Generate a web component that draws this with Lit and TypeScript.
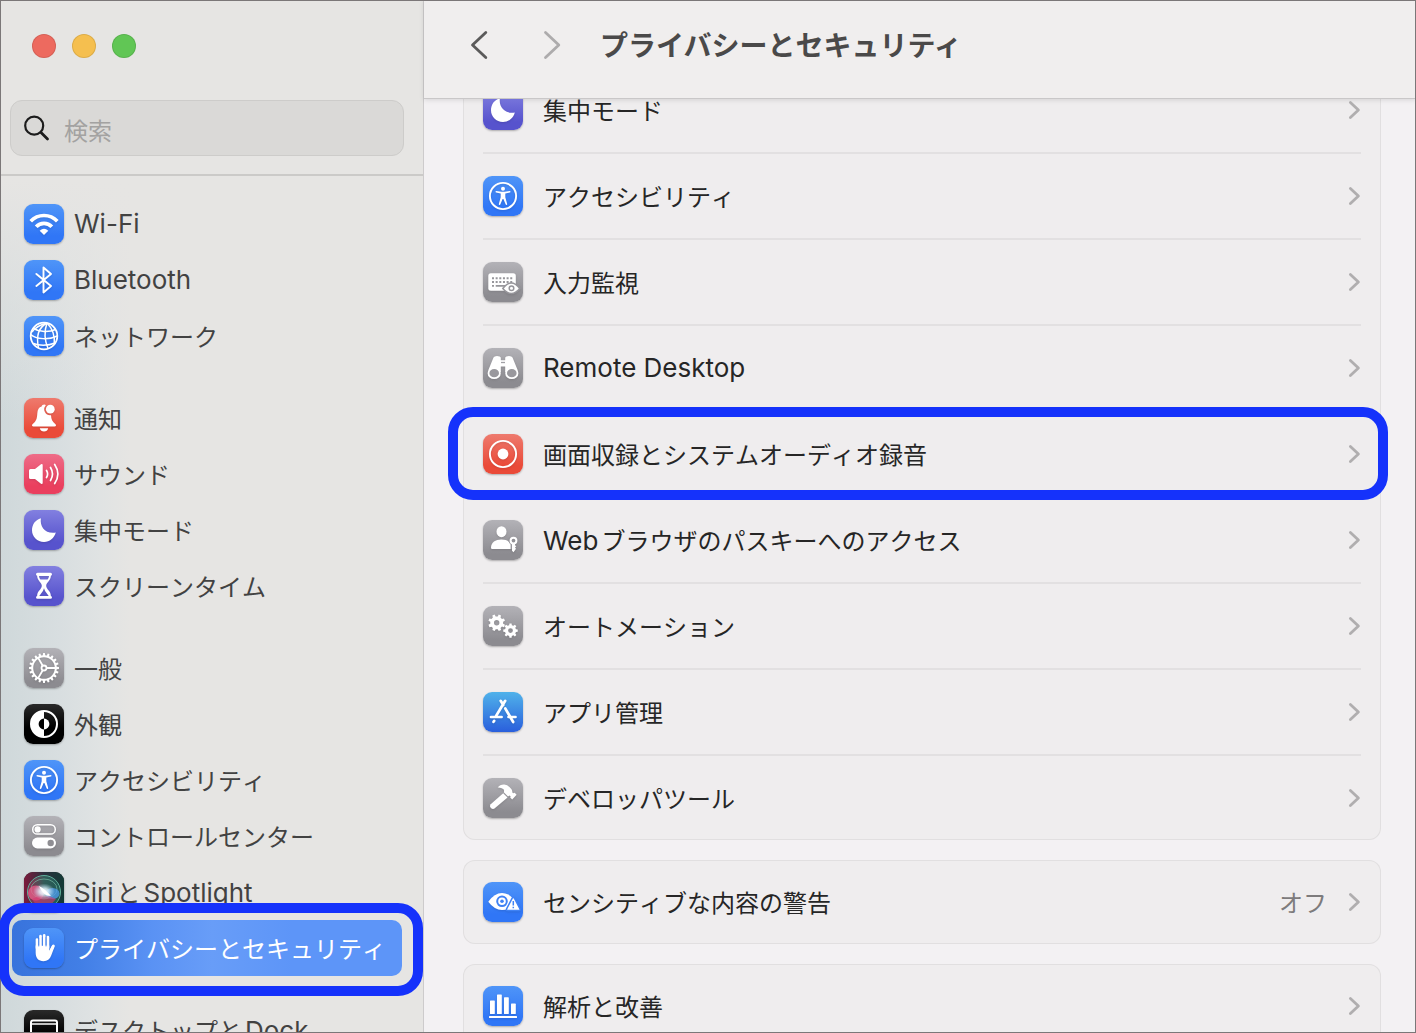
import { LitElement, html, css, svg, nothing, type SVGTemplateResult } from "lit";
import { customElement, property } from "lit/decorators.js";
import { classMap } from "lit/directives/class-map.js";

/** Outline of a cog wheel with flat teeth, optionally with a round hole. */
function gear(cx: number, cy: number, outer: number, inner: number, teeth: number, hole = 0, turn = 0): string {
  const pts: string[] = [];
  const step = (Math.PI * 2) / teeth;
  for (let i = 0; i < teeth; i++) {
    const a = i * step + turn;
    const spots: [number, number][] = [
      [inner, a - step * 0.3],
      [outer, a - step * 0.19],
      [outer, a + step * 0.19],
      [inner, a + step * 0.3],
    ];
    for (const [r, t] of spots) {
      pts.push(`${(cx + r * Math.cos(t)).toFixed(2)} ${(cy + r * Math.sin(t)).toFixed(2)}`);
    }
  }
  const ring = hole
    ? `M${cx - hole} ${cy}a${hole} ${hole} 0 1 0 ${hole * 2} 0a${hole} ${hole} 0 1 0 ${-hole * 2} 0Z`
    : "";
  return `M${pts.join("L")}Z${ring}`;
}

const MOON = svg`<path fill="#fff" d="M16.9 8.2C15.6 16.6 21.2 24.2 31.8 22.6C30.3 28.3 25.7 32 20 32C13.2 32 8 26.9 8 20.3C8 14.4 11.5 9.6 16.9 8.2Z"/>`;

const PERSON_RING = svg`
  <circle cx="20" cy="20" r="13.1" fill="none" stroke="#fff" stroke-width="1.9"/>
  <circle cx="20" cy="12.8" r="2" fill="#fff"/>
  <path fill="#fff" d="M13.3 15.1L18.3 15.7H21.7L26.7 15.1Q27.5 15.1 27.5 15.8Q27.5 16.3 26.9 16.5L22.3 17.5V21.3L24.2 28Q24.3 28.9 23.6 29Q22.9 29.1 22.6 28.3L20.4 22.9H19.6L17.4 28.3Q17.1 29.1 16.4 29Q15.7 28.900 15.8 28L17.700 21.3V17.5L13.1 16.5Q12.5 16.3 12.5 15.8Q12.5 15.1 13.3 15.1Z"/>`;

const ICONS: Record<string, SVGTemplateResult> = {
  wifi: svg`
    <g fill="none" stroke="#fff">
      <path stroke-width="3.7" d="M6.7 17.2A18.4 18.4 0 0 1 33.3 17.2"/>
      <path stroke-width="3.7" d="M12.2 22.8A10.5 10.5 0 0 1 27.8 22.8"/>
    </g>
    <path fill="#fff" d="M20 31L15.7 26.7Q20 22.7 24.3 26.7Z"/>`,
  bluetooth: svg`<path fill="none" stroke="#fff" stroke-width="1.9" stroke-linejoin="round" stroke-linecap="round" d="M12.4 13.9L27 26L19.5 32.5V7.5L27 14L12.4 26"/>`,
  globe: svg`
    <g fill="none" stroke="#fff" stroke-width="1.5">
      <circle cx="20" cy="20" r="13.3" stroke-width="1.8"/>
      <path d="M23 7C15 11 12 20 14.5 32"/>
      <path d="M23 7C20.5 14 20.5 24 24 32.5"/>
      <path d="M23 7C28 12 31 19 30.3 28"/>
      <path d="M23 7C17 8.5 11 12 8 16"/>
      <path d="M9.5 12.5C15 16 25 16.5 31.5 13.5"/>
      <path d="M6.8 18.5C12 23.5 25 24 33.3 20"/>
      <path d="M9.5 27.5C14 29.5 24 30 31 27"/>
    </g>`,
  bell: svg`
    <path fill="#fff" d="M20.3 6.5C21 6.5 21.5 6.8 21.8 7.2A6 6 0 0 0 27 17.2C27.200 21.5 28.3 23.5 31 25.7Q32.3 26.8 31.9 27.7Q31.7 28.5 30.5 28.5H9.5Q8.3 28.5 8.1 27.7Q7.7 26.8 9 25.7C12.4 23 13 20.5 13.3 15.5C13.6 11.5 14.9 9.3 17.6 8.6C17.8 7.3 18.8 6.5 20.3 6.5Z"/>
    <circle cx="26.3" cy="11.2" r="4.400" fill="#fff"/>
    <path fill="#fff" d="M15.8 30.2H24.2Q23.3 33.5 20 33.5T15.8 30.2Z"/>`,
  sound: svg`
    <path fill="#fff" d="M6.5 15H11L17 10.3Q18.7 9.5 18.7 11.3V28.7Q18.7 30.5 17 29.7L11 25H6.5Q5 25 5 23.5V16.5Q5 15 6.5 15Z"/>
    <g fill="none" stroke="#fff" stroke-width="1.7" stroke-linecap="round">
      <path d="M22.5 16.5Q24.7 20 22.5 23.5"/>
      <path d="M26.5 13.5Q30.5 20 26.5 26.5"/>
      <path d="M30.7 10.5Q37 20 30.7 29.5"/>
    </g>`,
  moon: MOON,
  hourglass: svg`
    <path fill="#fff" fill-rule="evenodd" d="M13.5 6.8H26.5Q28 6.8 28 8.3Q28 9.6 26.9 9.7C26.7 14.8 22.2 16.3 22.2 19.8S26.7 24.8 26.9 29.9Q28 30 28 31.2Q28 32.8 26.5 32.8H13.5Q12 32.8 12 31.2Q12 30 13.1 29.9C13.3 24.8 17.8 23.3 17.8 19.8S13.3 14.8 13.1 9.7Q12 9.6 12 8.3Q12 6.8 13.5 6.8ZM15 9.9Q15.2 12 16.4 13.6H23.6Q24.8 12 25 9.9ZM20 22.2Q19.6 25 16.2 28.7Q15.5 29.4 15.3 30.1H24.7Q24.5 29.4 23.8 28.7Q20.4 25 20 22.2Z"/>`,
  general: svg`
    <path fill="#fff" fill-rule="evenodd" d="${gear(20, 20, 15, 12.8, 20, 10.8)}"/>
    <g stroke="#fff" stroke-width="1.8" fill="none">
      <circle cx="20" cy="20" r="2.5"/>
      <path d="M22.5 20H32M18.75 17.8L14 9.6M18.75 22.2L14 30.4"/>
    </g>`,
  appearance: svg`
    <circle cx="20" cy="20" r="13" fill="none" stroke="#fff" stroke-width="2"/>
    <path fill="#fff" d="M20 7A13 13 0 0 0 20 33Z"/>
    <path fill="#000" d="M20 14.6A5.4 5.4 0 0 0 20 25.4Z"/>
    <path fill="#fff" d="M20 14.6A5.4 5.4 0 0 1 20 25.4Z"/>`,
  accessibility: PERSON_RING,
  control: svg`
    <rect x="8.7" y="8.7" width="22.6" height="9.4" rx="4.7" fill="none" stroke="#fff" stroke-width="1.5"/>
    <circle cx="13.6" cy="13.4" r="3.1" fill="#fff"/>
    <rect x="8" y="21.6" width="24" height="10.8" rx="5.4" fill="#fff"/>
    <circle cx="26.7" cy="27" r="3.2" fill="#8f8e93"/>`,
  siri: svg`
    <defs>
      <linearGradient id="siri-base" x1="0" x2="1"><stop offset="0" stop-color="#7d1a3c"/><stop offset=".5" stop-color="#2b2f3c"/><stop offset="1" stop-color="#123a36"/></linearGradient>
      <radialGradient id="siri-glow"><stop offset="0" stop-color="#fff"/><stop offset=".4" stop-color="#e4f6ff" stop-opacity=".8"/><stop offset="1" stop-color="#bfe6ff" stop-opacity="0"/></radialGradient>
      <linearGradient id="siri-top" x1="0" x2="1"><stop offset="0" stop-color="#c0436b"/><stop offset=".5" stop-color="#3fa183"/><stop offset="1" stop-color="#2b8a80"/></linearGradient>
    </defs>
    <rect width="40" height="40" rx="9" fill="url(#siri-base)"/>
    <circle cx="20" cy="20" r="16.5" fill="url(#siri-top)" opacity=".4"/>
    <circle cx="20" cy="20" r="16.500" fill="none" stroke="#5fae9a" stroke-width="1"/>
    <ellipse cx="20" cy="17" rx="13" ry="10" fill="none" stroke="#7fc7ae" stroke-width="1" opacity=".6"/>
    <ellipse cx="12" cy="21" rx="8" ry="7.5" fill="#ec5f8c" opacity=".75"/>
    <ellipse cx="28.500" cy="21.5" rx="7" ry="5.5" fill="#4f9cee" opacity=".75"/>
    <path fill="#d8366f" opacity=".6" d="M8 27Q20 20 32 27Q26 35 18 35Q11 33 8 27Z"/>
    <ellipse cx="20" cy="19.5" rx="11" ry="8" fill="url(#siri-glow)"/>
    <path fill="#fff" d="M15 14Q21 17 27 24Q19 24 15 14Z"/>`,
  hand: svg`
    <g stroke="#fff" stroke-width="2.7" stroke-linecap="round" stroke-linejoin="round" fill="none">
      <path d="M13 20V11.5M16.5 20V8.2M20.2 20V7.4M23.9 20V9.2"/>
      <path d="M25.5 25L29.4 17.9"/>
    </g>
    <path fill="#fff" d="M11.65 17.5H25.25V23.5L28.2 17.3L30.6 18.6L27.2 27.5Q25.2 33.2 19.5 33.2C14.5 33.2 11.65 30 11.65 24.5Z"/>
    <path stroke="#3f7ff0" stroke-width="0.7" d="M14.75 10V18.5M18.35 9V18M22.05 9V18.5"/>`,
  dock: svg`
    <rect x="7" y="10.5" width="26" height="20" rx="2" fill="none" stroke="#fff" stroke-width="2"/>
    <path stroke="#fff" stroke-width="1.5" d="M7 14H33"/>
    <rect x="12" y="25" width="16" height="3" rx="1" fill="#fff"/>`,
  keyboard: svg`
    <rect x="5.3" y="11.3" width="27.5" height="17.4" rx="2.5" fill="#fff"/>
    <g stroke="#97969b" stroke-width="1.9" fill="none">
      <path stroke-dasharray="2 1.65" d="M9 16.3H30M9 20H30"/>
      <path d="M9 23.9H11M12.7 23.9H23"/>
    </g>
    <path fill="#fff" stroke="#97969b" stroke-width="1.5" d="M19.8 26.5Q28.3 15.3 36.8 26.5Q28.3 36.5 19.8 26.5Z"/>
    <circle cx="28.5" cy="26.2" r="2.3" fill="none" stroke="#97969b" stroke-width="1.5"/>`,
  binoculars: svg`
    <path fill="#fff" d="M10.5 9.5Q11.2 8 14 8Q17.3 8 17.8 9.5V12.3H22.2V9.5Q22.7 8 26 8Q28.8 8 29.5 9.5L34.8 22.5L22.2 24V18.5H17.8V24L5.2 22.5Z"/>
    <path stroke="#a1a0a5" stroke-width="1.3" d="M18 14.5H22"/>
    <ellipse cx="11.2" cy="25.2" rx="5.7" ry="5" fill="#99989d" stroke="#fff" stroke-width="1.8"/>
    <ellipse cx="28.8" cy="25.2" rx="5.7" ry="5" fill="#99989d" stroke="#fff" stroke-width="1.8"/>`,
  record: svg`
    <circle cx="20" cy="20" r="13.1" fill="none" stroke="#fff" stroke-width="1.9"/>
    <circle cx="20" cy="20" r="5.4" fill="#fff"/>`,
  passkey: svg`
    <ellipse cx="18.5" cy="11.7" rx="5" ry="5.5" fill="#fff"/>
    <path fill="#fff" d="M8 27.7C8 22.5 12.5 19.6 18.3 19.6C21.5 19.6 24.3 20.3 26 22L28 24.2V29H9.3Q8 29 8 27.7Z"/>
    <path fill="none" stroke="#98979c" stroke-width="1.4" d="M28.3 29V24.3A5 5 0 0 1 27 17.5"/>
    <circle cx="30.5" cy="20.6" r="2.9" fill="none" stroke="#fff" stroke-width="2"/>
    <path fill="#fff" d="M29 23H32V25.3L33.3 26.3L32 27.5L33 28.7L30.5 32.3L29 30.8Z"/>`,
  gears: svg`
    <path fill="#fff" fill-rule="evenodd" d="${gear(13.7, 16.8, 8.5, 6.5, 8, 2.7, 0.39)}"/>
    <path fill="#fff" fill-rule="evenodd" d="${gear(27.5, 24.6, 7.3, 5.6, 8, 2.4)}"/>`,
  appstore: svg`
    <g stroke="#fff" stroke-width="2.7" stroke-linecap="round" fill="none">
      <path d="M22.2 8.8L13.2 23.8M17.7 8.8L20.3 13M22.3 16.5L30.2 30"/>
      <path d="M8 25H18.6M25.5 25H32.5M11.2 28.8L10.5 29.9"/>
    </g>`,
  hammer: svg`
    <g fill="#fff">
      <path d="M20.2 15.2L24.5 19.5L11.5 30.6Q9.7 31.7 7.9 30Q6.2 28.1 7.4 26.5Z"/>
      <path d="M14.7 9.5Q17 6.3 21.3 6.5Q24.3 6.8 26.7 9.2L28.5 11.2Q29.5 12.7 29.2 14.2L30.2 15.2L31.7 14.8L33.6 16.7L29.2 21.5L27.2 19.6L27.6 18.3L26.5 17.4L25 18.4L20.8 14.2Q21.6 12.2 20.2 11Q18 9.3 14.7 9.5Z"/>
    </g>`,
  sensitive: svg`
    <path fill="#fff" d="M5.3 19.7Q11.5 11 19 11Q26.5 11 32.5 19.3Q27 28 19 28Q11.5 28 5.3 19.7Z"/>
    <circle cx="19" cy="19.3" r="4.8" fill="none" stroke="#3f82f5" stroke-width="2"/>
    <circle cx="19" cy="19.3" r="1.8" fill="#3f82f5"/>
    <path fill="#fff" stroke="#3f82f5" stroke-width="1.5" stroke-linejoin="round" d="M30.3 15.5Q31 15.5 31.4 16.2L37 26.8Q37.5 28.5 36 28.5H24.6Q23.1 28.5 23.6 26.8L29.2 16.2Q29.6 15.5 30.3 15.5Z"/>
    <path stroke="#3f82f5" stroke-width="1.5" d="M30.3 19V23.5M30.3 24.8V26.3"/>`,
  bars: svg`
    <g fill="#fff">
      <rect x="7" y="14.5" width="4.8" height="13.5" rx="0.6"/>
      <rect x="14" y="8.5" width="4.8" height="19.5" rx="0.6"/>
      <rect x="21" y="11.3" width="4.8" height="16.7" rx="0.6"/>
      <rect x="28" y="17.6" width="4.8" height="10.4" rx="0.6"/>
      <rect x="6" y="30" width="28" height="2" rx="0.5"/>
    </g>`,
};

type Tone = "blue" | "red" | "pink" | "indigo" | "gray" | "black" | "sky";

interface Entry {
  icon: string;
  tone: Tone;
  label: string;
  value?: string;
  selected?: boolean;
  marked?: boolean;
}

const SIDEBAR: Entry[][] = [
  [
    { icon: "wifi", tone: "blue", label: "Wi-Fi" },
    { icon: "bluetooth", tone: "blue", label: "Bluetooth" },
    { icon: "globe", tone: "blue", label: "ネットワーク" },
  ],
  [
    { icon: "bell", tone: "red", label: "通知" },
    { icon: "sound", tone: "pink", label: "サウンド" },
    { icon: "moon", tone: "indigo", label: "集中モード" },
    { icon: "hourglass", tone: "indigo", label: "スクリーンタイム" },
  ],
  [
    { icon: "general", tone: "gray", label: "一般" },
    { icon: "appearance", tone: "black", label: "外観" },
    { icon: "accessibility", tone: "blue", label: "アクセシビリティ" },
    { icon: "control", tone: "gray", label: "コントロールセンター" },
    { icon: "siri", tone: "black", label: "SiriとSpotlight" },
    { icon: "hand", tone: "blue", label: "プライバシーとセキュリティ", selected: true, marked: true },
  ],
  [{ icon: "dock", tone: "black", label: "デスクトップとDock" }],
];

const CARDS: Entry[][] = [
  [
    { icon: "moon", tone: "indigo", label: "集中モード" },
    { icon: "accessibility", tone: "blue", label: "アクセシビリティ" },
    { icon: "keyboard", tone: "gray", label: "入力監視" },
    { icon: "binoculars", tone: "gray", label: "Remote Desktop" },
    { icon: "record", tone: "red", label: "画面収録とシステムオーディオ録音", marked: true },
    { icon: "passkey", tone: "gray", label: "Webブラウザのパスキーへのアクセス" },
    { icon: "gears", tone: "gray", label: "オートメーション" },
    { icon: "appstore", tone: "sky", label: "アプリ管理" },
    { icon: "hammer", tone: "gray", label: "デベロッパツール" },
  ],
  [{ icon: "sensitive", tone: "blue", label: "センシティブな内容の警告", value: "オフ" }],
  [{ icon: "bars", tone: "blue", label: "解析と改善" }],
];

@customElement("app-tile")
export class AppTile extends LitElement {
  @property() icon = "";
  @property() tone: Tone = "blue";

  static styles = css`
    :host {
      display: block;
      flex: none;
    }
    .tile {
      width: 40px;
      height: 40px;
      border-radius: 9px;
      box-shadow: 0 1px 2px rgba(0, 0, 0, 0.28);
    }
    .blue { background: linear-gradient(#4f95f8, #3076f6 80%); }
    .red { background: linear-gradient(#ee7a6e, #ea4a38 80%); }
    .pink { background: linear-gradient(#ee6c88, #ea3f5e 80%); }
    .indigo { background: linear-gradient(#8280e0, #5753cd 80%); }
    .gray { background: linear-gradient(#b3b2b7, #8c8b90 85%); }
    .black { background: linear-gradient(#2a2a2a, #000 60%); }
    .sky { background: linear-gradient(#50b2ea, #2a5fdc); }
    svg {
      display: block;
      filter: drop-shadow(0 1px 1px rgba(0, 0, 0, 0.12));
    }
  `;

  render() {
    return html`<div class="tile ${this.tone}">
      <svg width="40" height="40" viewBox="0 0 40 40" aria-hidden="true">${ICONS[this.icon]}</svg>
    </div>`;
  }
}

/** Text whose Latin runs are set a little larger than its Japanese ones. */
@customElement("app-label")
export class AppLabel extends LitElement {
  @property() text = "";

  static styles = css`
    :host {
      display: block;
      padding-top: 3px;
      white-space: nowrap;
      line-height: 32px;
    }
    .run {
      font-family: "Noto Sans CJK JP", sans-serif;
      font-size: 24px;
      font-kerning: none;
    }
    .latin {
      font-family: Inter, "Liberation Sans", sans-serif;
      font-size: 26px;
      font-kerning: auto;
    }
    .run + .run {
      margin-left: 3px;
    }
  `;

  render() {
    const runs = this.text.match(/[\x20-\x7e]+|[^\x20-\x7e]+/g) ?? [];
    return runs.map(
      (r) => html`<span class=${classMap({ run: true, latin: /^[\x20-\x7e]/.test(r) })}>${r}</span>`,
    );
  }
}

@customElement("app-root")
export class AppRoot extends LitElement {
  static styles = css`
    :host {
      display: block;
      font-family: Inter, "Noto Sans CJK JP", sans-serif;
    }
    * {
      box-sizing: border-box;
    }
    button {
      border: 0;
      padding: 0;
      background: none;
      font: inherit;
      color: inherit;
      text-align: left;
    }
    svg {
      display: block;
    }
    .window {
      position: relative;
      display: flex;
      height: 100vh;
      overflow: hidden;
      background: #f3f1f3;
    }
    .window::after {
      content: "";
      position: absolute;
      inset: 0;
      z-index: 1;
      border: 1px solid #7b7778;
      pointer-events: none;
    }

    .sidebar {
      flex: none;
      display: flex;
      flex-direction: column;
      width: 424px;
      overflow: hidden;
      border-right: 1px solid #cdcbcc;
      background:
        linear-gradient(#e6e5e3 180px, rgba(230, 229, 227, 0) 420px),
        linear-gradient(90deg, #cfd8da, #d8dee0 60px, #e0e3e3 100px, #e6e5e3 130px);
      color: #424242;
    }
    .lights {
      display: flex;
      gap: 16px;
      padding: 34px 32px 42px;
    }
    .light {
      width: 24px;
      height: 24px;
      border-radius: 50%;
      box-shadow: inset 0 0 0 1px rgba(0, 0, 0, 0.1);
    }
    .close { background: #ed6a5f; }
    .shrink { background: #f5bf4f; }
    .grow { background: #61c655; }
    .search {
      display: flex;
      align-items: center;
      gap: 14px;
      height: 56px;
      margin: 0 19px 18px 10px;
      padding: 0 13px;
      border: 1px solid #cdccca;
      border-radius: 12px;
      background: #dad9d7;
    }
    .field {
      flex: 1;
      min-width: 0;
      border: 0;
      padding: 3px 0 0;
      outline: 0;
      background: none;
      font-family: "Noto Sans CJK JP", sans-serif;
      font-size: 24px;
      line-height: 32px;
      color: #262626;
    }
    .field::placeholder {
      color: #a3a2a1;
      opacity: 1;
    }
    .places {
      flex: 1;
      min-height: 0;
      overflow: hidden;
      display: flex;
      flex-direction: column;
      gap: 26px;
      padding: 20px 21px 0 12px;
      border-top: 2px solid #cbcac8;
    }
    .place {
      position: relative;
      display: flex;
      align-items: center;
      gap: 10px;
      height: 56px;
      padding: 0 12px;
      border-radius: 10px;
      color: inherit;
      text-decoration: none;
    }
    .selected {
      background: linear-gradient(90deg, #3873dc, #427fe6 70px, #5a92f4 140px, #689df8 200px, #5d95f8 280px);
      color: #fff;
    }
    .place.marked::after,
    .row.marked::after {
      content: "";
      position: absolute;
      z-index: 2;
      border: 10px solid #1532fb;
      border-radius: 25px;
      pointer-events: none;
    }
    .place.marked::after {
      inset: -17px -21px -20px -13px;
    }

    .main {
      flex: 1;
      min-width: 0;
      display: flex;
      flex-direction: column;
    }
    .bar {
      position: relative;
      flex: none;
      display: flex;
      align-items: center;
      height: 99px;
      padding: 0 36px 8px;
      border-bottom: 1px solid #c9c7c8;
      box-shadow: 0 1px 5px rgba(0, 0, 0, 0.12);
      background: #f0eeee;
      color: #4a4949;
    }
    .step {
      display: grid;
      place-items: center;
      width: 40px;
      height: 40px;
      color: #5b5a5a;
    }
    .step + .step {
      margin-left: 32px;
    }
    .step:disabled {
      color: #adabac;
    }
    .title {
      margin: 0 0 0 28px;
      padding-top: 2px;
      font-size: 28px;
      line-height: 40px;
      font-weight: 600;
      white-space: nowrap;
    }
    .scroll {
      flex: 1;
      min-height: 0;
      overflow: hidden;
      padding: 0 35px 0 39px;
    }
    .cards {
      display: flex;
      flex-direction: column;
      gap: 20px;
      margin-top: -31px;
    }
    .card {
      padding: 0 20px;
      border-radius: 12px;
      background: #efedee;
      box-shadow: inset 0 0 0 1px #e1dfe0;
      color: #262626;
    }
    .row {
      position: relative;
      display: flex;
      align-items: center;
      gap: 20px;
      width: 100%;
      height: 84px;
    }
    .row + .row {
      height: 86px;
      border-top: 2px solid #e2e0e1;
    }
    .row.marked::after {
      inset: -5px -27px -4px -35px;
    }
    .value {
      margin-left: auto;
      color: #7d7b7c;
    }
    .chevron {
      margin-left: auto;
      color: #b0aeaf;
    }
    .value + .chevron {
      margin-left: 0;
    }
  `;

  private place(e: Entry) {
    return html`<a
      class=${classMap({ place: true, selected: !!e.selected, marked: !!e.marked })}
      href="#"
      aria-current=${e.selected ? "page" : nothing}
    >
      <app-tile .icon=${e.icon} .tone=${e.tone}></app-tile>
      <app-label .text=${e.label}></app-label>
    </a>`;
  }

  private row(e: Entry) {
    return html`<button class=${classMap({ row: true, marked: !!e.marked })} type="button">
      <app-tile .icon=${e.icon} .tone=${e.tone}></app-tile>
      <app-label .text=${e.label}></app-label>
      ${e.value ? html`<app-label class="value" .text=${e.value}></app-label>` : nothing}
      <svg class="chevron" width="14" height="20" viewBox="0 0 14 20" aria-hidden="true">
        <path fill="none" stroke="currentColor" stroke-width="2.8" stroke-linecap="round" stroke-linejoin="round" d="M3.4 2.4L11.4 10L3.4 17.6" />
      </svg>
    </button>`;
  }

  render() {
    return html`<div class="window">
      <aside class="sidebar">
        <div class="lights">
          <button class="light close" type="button" aria-label="閉じる"></button>
          <button class="light shrink" type="button" aria-label="しまう"></button>
          <button class="light grow" type="button" aria-label="拡大"></button>
        </div>
        <label class="search">
          <svg width="26" height="26" viewBox="0 0 26 26" aria-hidden="true">
            <g fill="none" stroke="#1c1c1c" stroke-linecap="round">
              <circle cx="10.2" cy="10.7" r="9" stroke-width="2.2" />
              <path stroke-width="2.8" d="M17 17.5L23.5 24" />
            </g>
          </svg>
          <input class="field" type="text" placeholder="検索" aria-label="検索" />
        </label>
        <nav class="places">
          ${SIDEBAR.map((group) => html`<div class="group">${group.map((e) => this.place(e))}</div>`)}
        </nav>
      </aside>
      <main class="main">
        <header class="bar">
          <button class="step" type="button" aria-label="戻る">
            <svg width="20" height="30" viewBox="0 0 20 30" aria-hidden="true">
              <path fill="none" stroke="currentColor" stroke-width="2.8" stroke-linecap="round" stroke-linejoin="round" d="M15.8 2.400L2.5 15L15.8 27.6" />
            </svg>
          </button>
          <button class="step" type="button" aria-label="進む" disabled>
            <svg width="20" height="30" viewBox="0 0 20 30" aria-hidden="true">
              <path fill="none" stroke="currentColor" stroke-width="2.8" stroke-linecap="round" stroke-linejoin="round" d="M3.5 2.4L16.8 15L3.5 27.6" />
            </svg>
          </button>
          <h1 class="title">プライバシーとセキュリティ</h1>
        </header>
        <div class="scroll">
          <div class="cards">
            ${CARDS.map((card) => html`<section class="card">${card.map((e) => this.row(e))}</section>`)}
          </div>
        </div>
      </main>
    </div>`;
  }
}
